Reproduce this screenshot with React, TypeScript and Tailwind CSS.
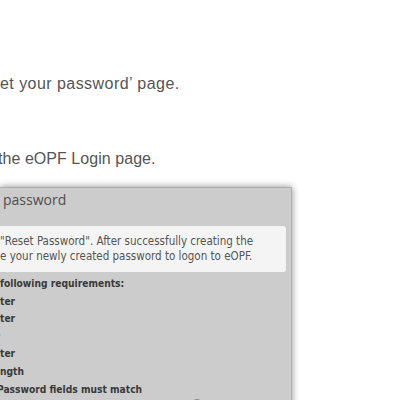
import { FC } from "react";

// line of text whose beginning runs off the left edge of the page
const Cut: FC<{ hidden: string; shown: string; className?: string }> = ({
  hidden,
  shown,
  className,
}) => {
  return (
    <div className={`flex whitespace-nowrap ${className ?? ""}`}>
      <span className="flex w-0 justify-end">{hidden}</span>
      <span>{shown}</span>
    </div>
  );
};

const requirements = [
  { hidden: "At least 1 uppercase let", shown: "ter", shift: "ml-0" },
  { hidden: "At least 1 lowercase let", shown: "ter", shift: "ml-0" },
  { hidden: "At least 1 number", shown: "", shift: "ml-0" },
  { hidden: "At least 1 special charac", shown: "ter", shift: "ml-0" },
  { hidden: "Minimum 8 characters in le", shown: "ngth", shift: "ml-0" },
  {
    hidden: "New and Confirm\u00a0",
    shown: "Password fields must match",
    shift: "-ml-[3px]",
  },
];

const App: FC = () => {
  return (
    <div className="h-[400px] w-[400px] overflow-hidden bg-white">
      <div className="flex flex-col pt-[74px] font-['Liberation_Sans',Arial,sans-serif] text-[16px] leading-[20px] text-[#555555]">
        <Cut
          className="tracking-[0.45px]"
          hidden={"2. Click the link in the email to open the \u2018Res"}
          shown={"et your password\u2019 page."}
        />
        <Cut
          className="mt-[55px] -ml-[2px] tracking-[0.05px]"
          hidden={"3. Once your password has been reset, return to\u00a0"}
          shown="the eOPF Login page."
        />
      </div>

      <div className="mt-[18px] w-[292px] border-t border-r border-[#adadad] bg-[#cccccc] pr-[5px] shadow-[0_0_7px_rgba(0,0,0,0.45)]">
        <Cut
          className="ml-[3px] pt-[2px] font-['Open_Sans',sans-serif] text-[14px] leading-[20px] text-[#4f4f4f]"
          hidden={"Create new\u00a0"}
          shown="password"
        />

        <div className="mt-[16px] rounded-r-[3px] bg-[#f4f4f4] py-[8px] font-['DejaVu_Sans_Condensed','DejaVu_Sans',sans-serif] text-[11.5px] leading-[15px] text-[#555555]">
          <Cut
            hidden={"Enter and confirm your new password, then click\u00a0"}
            shown={'"Reset Password". After successfully creating the'}
          />
          <Cut
            hidden="new password, you can us"
            shown="e your newly created password to logon to eOPF."
          />
        </div>

        <div className="flex flex-col pt-[3px] font-['DejaVu_Sans_Condensed','DejaVu_Sans',sans-serif] text-[10.2px] leading-[17.6px] font-bold text-[#3a3a3a]">
          <Cut
            hidden={"Your password must meet the\u00a0"}
            shown="following requirements:"
          />
          {requirements.map((r, i) => (
            <Cut key={i} className={r.shift} hidden={r.hidden} shown={r.shown} />
          ))}
          <div className="ml-[191px] mt-[1px] h-[12px] w-[12px] rounded-full border border-[#888888] bg-[#e6e6e6]" />
        </div>
      </div>
    </div>
  );
};

export default App;
